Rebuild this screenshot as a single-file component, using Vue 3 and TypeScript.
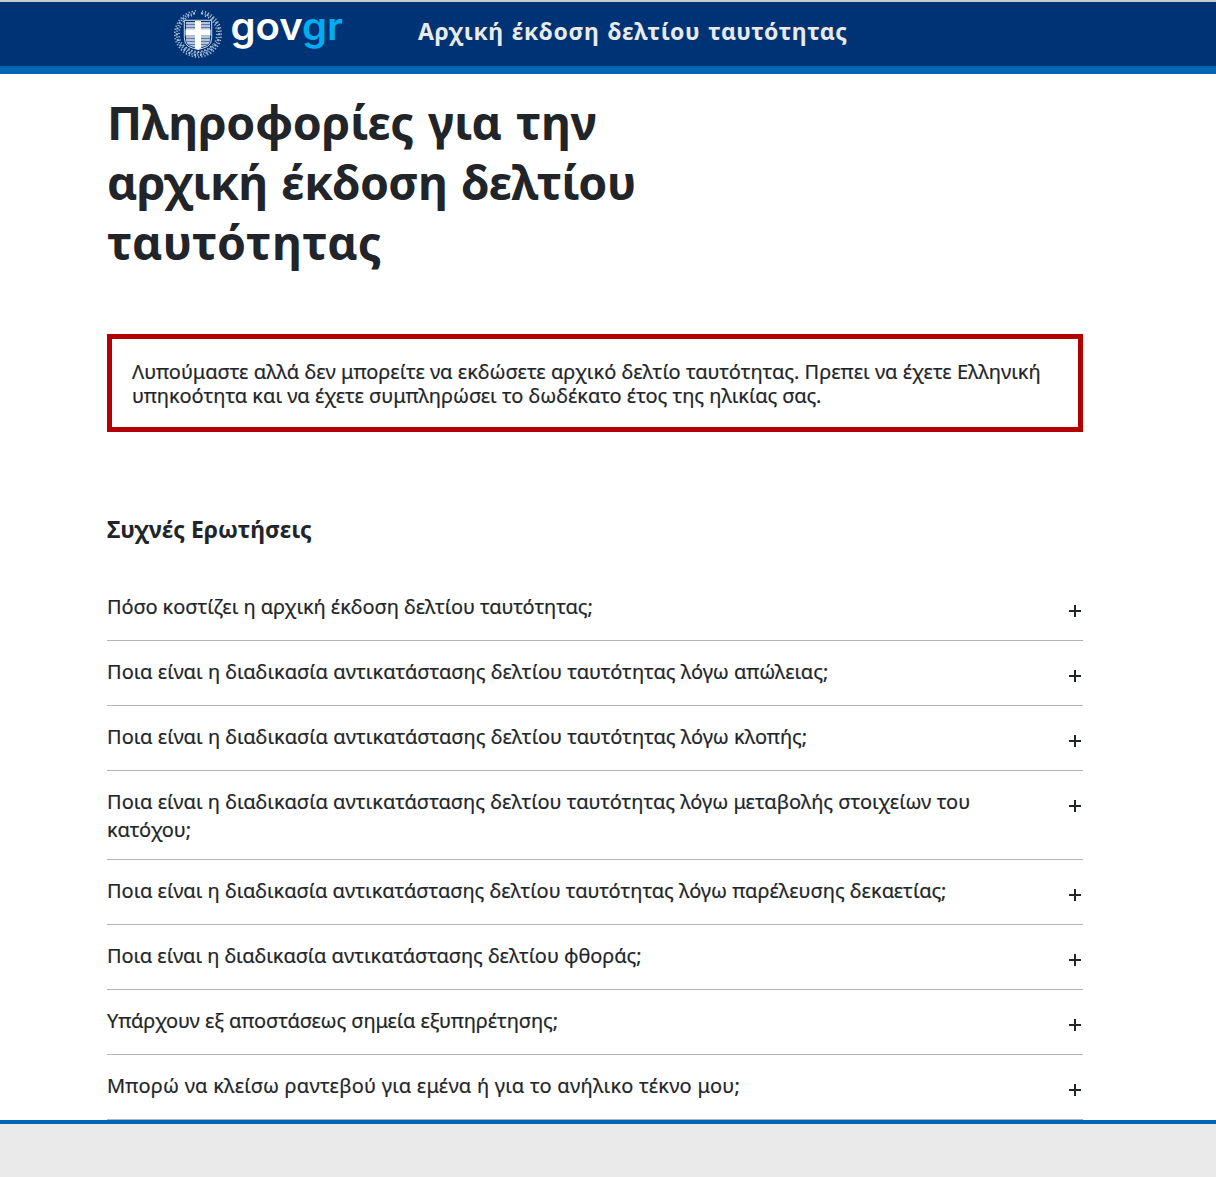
<script setup lang="ts">
interface Line {
  text: string
  spacing: number
}

const title: Line[] = [
  { text: 'Πληροφορίες για την', spacing: -0.27 },
  { text: 'αρχική έκδοση δελτίου', spacing: -0.69 },
  { text: 'ταυτότητας', spacing: 0.5 },
]

const notice: Line[] = [
  { text: 'Λυπούμαστε αλλά δεν μπορείτε να εκδώσετε αρχικό δελτίο ταυτότητας. Πρεπει να έχετε Ελληνική', spacing: 0 },
  { text: 'υπηκοότητα και να έχετε συμπληρώσει το δωδέκατο έτος της ηλικίας σας.', spacing: -0.03 },
]

const questions: Line[][] = [
  [{ text: 'Πόσο κοστίζει η αρχική έκδοση δελτίου ταυτότητας;', spacing: -0.06 }],
  [{ text: 'Ποια είναι η διαδικασία αντικατάστασης δελτίου ταυτότητας λόγω απώλειας;', spacing: 0.02 }],
  [{ text: 'Ποια είναι η διαδικασία αντικατάστασης δελτίου ταυτότητας λόγω κλοπής;', spacing: 0.02 }],
  [
    { text: 'Ποια είναι η διαδικασία αντικατάστασης δελτίου ταυτότητας λόγω μεταβολής στοιχείων του', spacing: 0.01 },
    { text: 'κατόχου;', spacing: -0.1 },
  ],
  [{ text: 'Ποια είναι η διαδικασία αντικατάστασης δελτίου ταυτότητας λόγω παρέλευσης δεκαετίας;', spacing: -0.01 }],
  [{ text: 'Ποια είναι η διαδικασία αντικατάστασης δελτίου φθοράς;', spacing: -0.05 }],
  [{ text: 'Υπάρχουν εξ αποστάσεως σημεία εξυπηρέτησης;', spacing: -0.09 }],
  [{ text: 'Μπορώ να κλείσω ραντεβού για εμένα ή για το ανήλικο τέκνο μου;', spacing: 0.235 }],
]

const tracking = (line: Line) => ({ letterSpacing: `${line.spacing}px` })
</script>

<template>
  <div class="page">
    <header class="header">
      <svg class="emblem" viewBox="0 0 50 50" aria-hidden="true">
        <path class="leaf leaf-a" d="M23 1.800C11 3 1.800 13 1.800 25S12 48 25 48S48.200 37 48.200 25S39 3 27 1.800" />
        <path class="leaf leaf-b" d="M22 4.200C10 6 3.800 15 3.800 25S13 46 25 46S46.200 35 46.200 25S40 6 28 4.200" />
        <path class="leaf leaf-c" d="M19 6.500C11 9 6 16 6 25S13 44 25 44S44 34 44 25S39 9 31 6.500" />
        <path class="leaf leaf-d" d="M10 36Q16 42 25 43Q34 42 40 36" />
        <path class="shield" d="M11.300 11.300h27.400v17.500q0 6-4 8.500q-4 2-9.700 3.200q-5.700-1.200-9.700-3.200q-4-2.500-4-8.500z" />
        <path class="field" d="M13 13h9v8h-9zM28 13h9v8h-9zM13 26.500h9v12l-5.500-2q-3.500-2-3.500-6zM28 26.500h9v4q0 4-3.500 6l-5.500 2z" />
        <path class="hatch" d="M13 15.500h24M13 18.500h24M13 29.500h24M13 32.500h24M15 35.500h20" />
        <path class="cross" d="M22 12h6v8.500h9.500v6h-9.500v13l-3 1l-3-1v-13h-9.500v-6h9.500z" />
      </svg>
      <svg class="brand" viewBox="0 0 116 50">
        <text x="-0.500" y="31" textLength="112.500" lengthAdjust="spacingAndGlyphs">gov<tspan class="accent">gr</tspan></text>
      </svg>
      <span class="service">Αρχική έκδοση δελτίου ταυτότητας</span>
    </header>

    <main class="content">
      <h1><span v-for="line in title" :key="line.text" class="line" :style="tracking(line)">{{ line.text }}</span></h1>
      <div class="notice"><span v-for="line in notice" :key="line.text" class="line" :style="tracking(line)">{{ line.text }}</span></div>
      <h2>Συχνές Ερωτήσεις</h2>
      <ul class="faq">
        <li v-for="lines in questions" :key="lines[0].text">
          <div class="question"><span v-for="line in lines" :key="line.text" class="line" :style="tracking(line)">{{ line.text }}</span></div>
          <svg class="plus" viewBox="0 0 12 12" aria-hidden="true"><path d="M0 6H12M6 0V12" /></svg>
        </li>
      </ul>
    </main>
    <footer class="footer"></footer>
  </div>
</template>

<style>
body {
  margin: 0;
}
</style>

<style scoped>
.page {
  display: flex;
  flex-direction: column;
  height: 1177px;
  overflow: hidden;
  box-sizing: border-box;
  background: #fff;
  color: #212529;
  font-family: 'Noto Sans', sans-serif;
}
.header {
  display: flex;
  flex: none;
  box-sizing: border-box;
  height: 74px;
  padding-left: 173px;
  border-top: 2px solid #c6cdd2;
  border-bottom: 8px solid #0065b3;
  background: #003375;
}
.emblem {
  flex: none;
  width: 50px;
  height: 50px;
  margin-top: 7px;
}
.leaf {
  fill: none;
  stroke: #a9bad3;
}
.leaf-a { stroke-width: 1.6; stroke-dasharray: 1.3 1.9; }
.leaf-b { stroke-width: 2.2; stroke-dasharray: 2 1.3 1 1.6; }
.leaf-c { stroke-width: 1.8; stroke-dasharray: 1.2 2.1; }
.leaf-d { stroke-width: 2; stroke-dasharray: 1.6 1.7; }
.shield { fill: #003375; stroke: #d5deea; stroke-width: 1; }
.field { fill: #b4c3d9; }
.hatch { stroke: #5c7ba8; stroke-width: 1; fill: none; }
.cross { fill: #fff; }
.brand {
  flex: none;
  width: 116px;
  height: 50px;
  margin: 7px 0 0 8px;
  overflow: visible;
  font: 600 39px Inter, sans-serif;
  fill: #fff;
}
.accent {
  fill: #00adf0;
}
.service {
  margin: 13px 0 0 71px;
  color: #eaeaea;
  font-size: 23px;
  font-weight: 700;
  letter-spacing: 0.58px;
  word-spacing: 1.5px;
  line-height: 32px;
  white-space: nowrap;
}
.content {
  flex: none;
  width: 976px;
  margin-left: 107px;
}
.line {
  display: block;
  width: max-content;
  white-space: nowrap;
}
h1 {
  margin: 18px 0 0;
  font-size: 46.5px;
  line-height: 60px;
  word-spacing: 2.5px;
}
.notice {
  box-sizing: border-box;
  height: 98px;
  margin-top: 62px;
  padding: 21px 20px;
  border: 5px solid #b50000;
  font-size: 20px;
  line-height: 24px;
}
.notice,
.question {
  -webkit-text-stroke: 0.2px #212529;
}
h2 {
  margin: 82px 0 0;
  font-size: 23px;
  line-height: 30px;
}
.faq {
  margin: 32px 0 0;
  padding: 0;
  list-style: none;
}
li {
  display: flex;
  justify-content: space-between;
  box-sizing: border-box;
  padding: 17px 2px 15px 0;
  border-bottom: 1px solid #b1b4b6;
  font-size: 20px;
}
.question {
  min-height: 32px;
  line-height: 28px;
}
.plus {
  flex: none;
  width: 12px;
  height: 12px;
  margin-top: 12px;
}
.plus path {
  stroke: #212529;
  stroke-width: 2;
}
.footer {
  flex: 1;
  border-top: 4px solid #0065b3;
  background: #eaeaea;
}
</style>
